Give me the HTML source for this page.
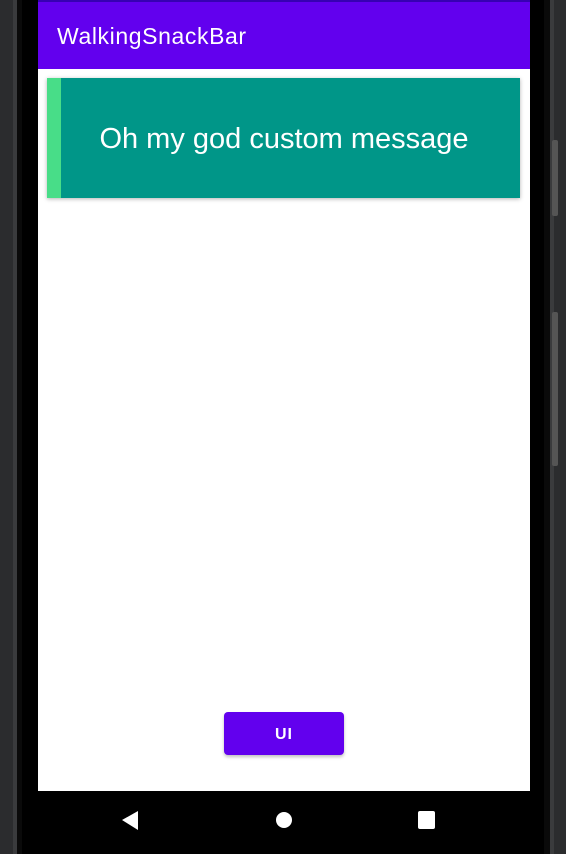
<!DOCTYPE html>
<html><head><style>
body{margin:0;width:566px;height:854px;background:#2b2c2e;position:relative;overflow:hidden;font-family:"Liberation Sans",sans-serif}
div{position:absolute}
</style></head><body>
<div style="left:13px;top:0;width:4px;height:854px;background:#3a3b3d"></div>
<div style="left:17px;top:0;width:533px;height:854px;background:#0a0a0a"></div>
<div style="left:22px;top:0;width:522px;height:854px;background:#000"></div>
<div style="left:550px;top:0;width:4px;height:854px;background:#3a3b3d"></div>
<div style="left:552px;top:140px;width:6px;height:76px;background:#555;border-radius:2px"></div>
<div style="left:552px;top:312px;width:6px;height:154px;background:#555;border-radius:2px"></div>
<div style="left:38px;top:0;width:492px;height:2px;background:#3700b3"></div>
<div style="left:38px;top:2px;width:492px;height:67px;background:#6200ee"></div>
<div style="left:57px;top:22px;color:#fff;font-size:23px;letter-spacing:0.6px;line-height:28px">WalkingSnackBar</div>
<div style="left:38px;top:69px;width:492px;height:722px;background:#fff"></div>
<div style="left:47px;top:78px;width:473px;height:120px;background:#009688;box-shadow:0 1px 4px rgba(0,0,0,.3)"></div>
<div style="left:47px;top:78px;width:14px;height:120px;background:#48dd88"></div>
<div style="left:61px;top:122px;width:446px;text-align:center;color:#fff;font-size:29px;line-height:34px;padding-left:0">Oh my god custom message</div>
<div style="left:224px;top:712px;width:120px;height:43px;background:#6200ee;border-radius:4px;box-shadow:0 2px 3px rgba(0,0,0,.25);color:#fff;font-size:16px;font-weight:bold;text-align:center;line-height:45px;letter-spacing:1px">UI</div>
<div style="left:38px;top:791px;width:492px;height:63px;background:#000"></div>
<svg style="position:absolute;left:0;top:0" width="566" height="854"><polygon points="122,820 138,811 138,830" fill="#fff"/><circle cx="284" cy="820" r="8" fill="#fff"/><rect x="418" y="811" width="17" height="18" rx="2" fill="#fff"/></svg>
</body></html>
